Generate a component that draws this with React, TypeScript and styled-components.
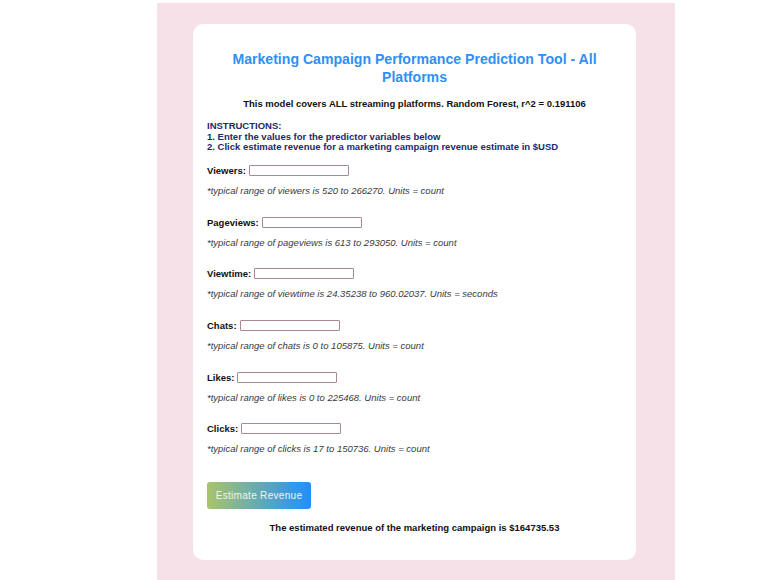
import React from "react";
import styled, { createGlobalStyle } from "styled-components";

const Global = createGlobalStyle`
  html, body { margin: 0; padding: 0; background: #ffffff; }
  body { font-family: "Liberation Sans", Arial, sans-serif; }
`;

const Page = styled.div`
  display: flex;
  padding: 3px 0 0 157px;
  min-height: 577px;
`;

const Backdrop = styled.div`
  width: 518px;
  background: #f5e1e7;
  padding: 21px 39px 21px 36px;
  box-sizing: border-box;
`;

const Card = styled.div`
  background: #ffffff;
  border-radius: 10px;
  padding: 26px 14px 27px 14px;
  display: flex;
  flex-direction: column;
`;

const Title = styled.h1`
  margin: 0 0 12px 0;
  text-align: center;
  color: #2f8ff5;
  font-size: 14.1px;
  line-height: 18px;
  font-weight: bold;
  padding: 0;
`;

const Subtitle = styled.p`
  margin: 0 0 12px 0;
  text-align: center;
  font-size: 9.5px;
  line-height: 11px;
  font-weight: bold;
  color: #111;
`;

const Instructions = styled.div`
  color: #1a2a6c;
  font-size: 9.5px;
  line-height: 10.5px;
  font-weight: bold;
  margin-bottom: 12px;
`;

const Field = styled.div`
  display: flex;
  flex-direction: column;
  margin-bottom: 20.2px;
`;

const LabelRow = styled.label`
  display: flex;
  align-items: center;
  gap: 3px;
  font-size: 9.5px;
  font-weight: bold;
  color: #111;
  height: 12px;
`;

const Input = styled.input`
  width: 100px;
  height: 11px;
  box-sizing: border-box;
  border: 1px solid #a98a90;
  border-radius: 1px;
  padding: 0;
  margin: 0;
  background: #fff;
`;

const Hint = styled.p`
  margin: 8.5px 0 0 0;
  font-size: 9.5px;
  line-height: 11px;
  font-style: italic;
  color: #3a3a3a;
`;

const Button = styled.button`
  align-self: flex-start;
  width: 104px;
  height: 27px;
  margin-top: 7px;
  border: none;
  border-radius: 3px;
  background: linear-gradient(to right, #a9c46a, #1e90ff);
  color: #f2f2f2;
  font-family: "Liberation Sans", Arial, sans-serif;
  font-size: 10px;
  letter-spacing: 0.3px;
  padding: 0;
`;

const Result = styled.p`
  margin: 13px 0 0 0;
  text-align: center;
  font-size: 9.5px;
  line-height: 11px;
  font-weight: bold;
  color: #111;
`;

const fields = [
  { label: "Viewers", hint: "*typical range of viewers is 520 to 266270. Units = count" },
  { label: "Pageviews", hint: "*typical range of pageviews is 613 to 293050. Units = count" },
  { label: "Viewtime", hint: "*typical range of viewtime is 24.35238 to 960.02037. Units = seconds" },
  { label: "Chats", hint: "*typical range of chats is 0 to 105875. Units = count" },
  { label: "Likes", hint: "*typical range of likes is 0 to 225468. Units = count" },
  { label: "Clicks", hint: "*typical range of clicks is 17 to 150736. Units = count" },
];

export default function App() {
  return (
    <>
      <Global />
      <Page>
        <Backdrop>
          <Card>
            <Title>Marketing Campaign Performance Prediction Tool - All Platforms</Title>
            <Subtitle>This model covers ALL streaming platforms. Random Forest, r^2 = 0.191106</Subtitle>
            <Instructions>
              INSTRUCTIONS:
              <br />
              1. Enter the values for the predictor variables below
              <br />
              2. Click estimate revenue for a marketing campaign revenue estimate in $USD
            </Instructions>
            {fields.map((f) => (
              <Field key={f.label}>
                <LabelRow>
                  {f.label}: <Input type="text" />
                </LabelRow>
                <Hint>{f.hint}</Hint>
              </Field>
            ))}
            <Button>Estimate Revenue</Button>
            <Result>The estimated revenue of the marketing campaign is $164735.53</Result>
          </Card>
        </Backdrop>
      </Page>
    </>
  );
}
